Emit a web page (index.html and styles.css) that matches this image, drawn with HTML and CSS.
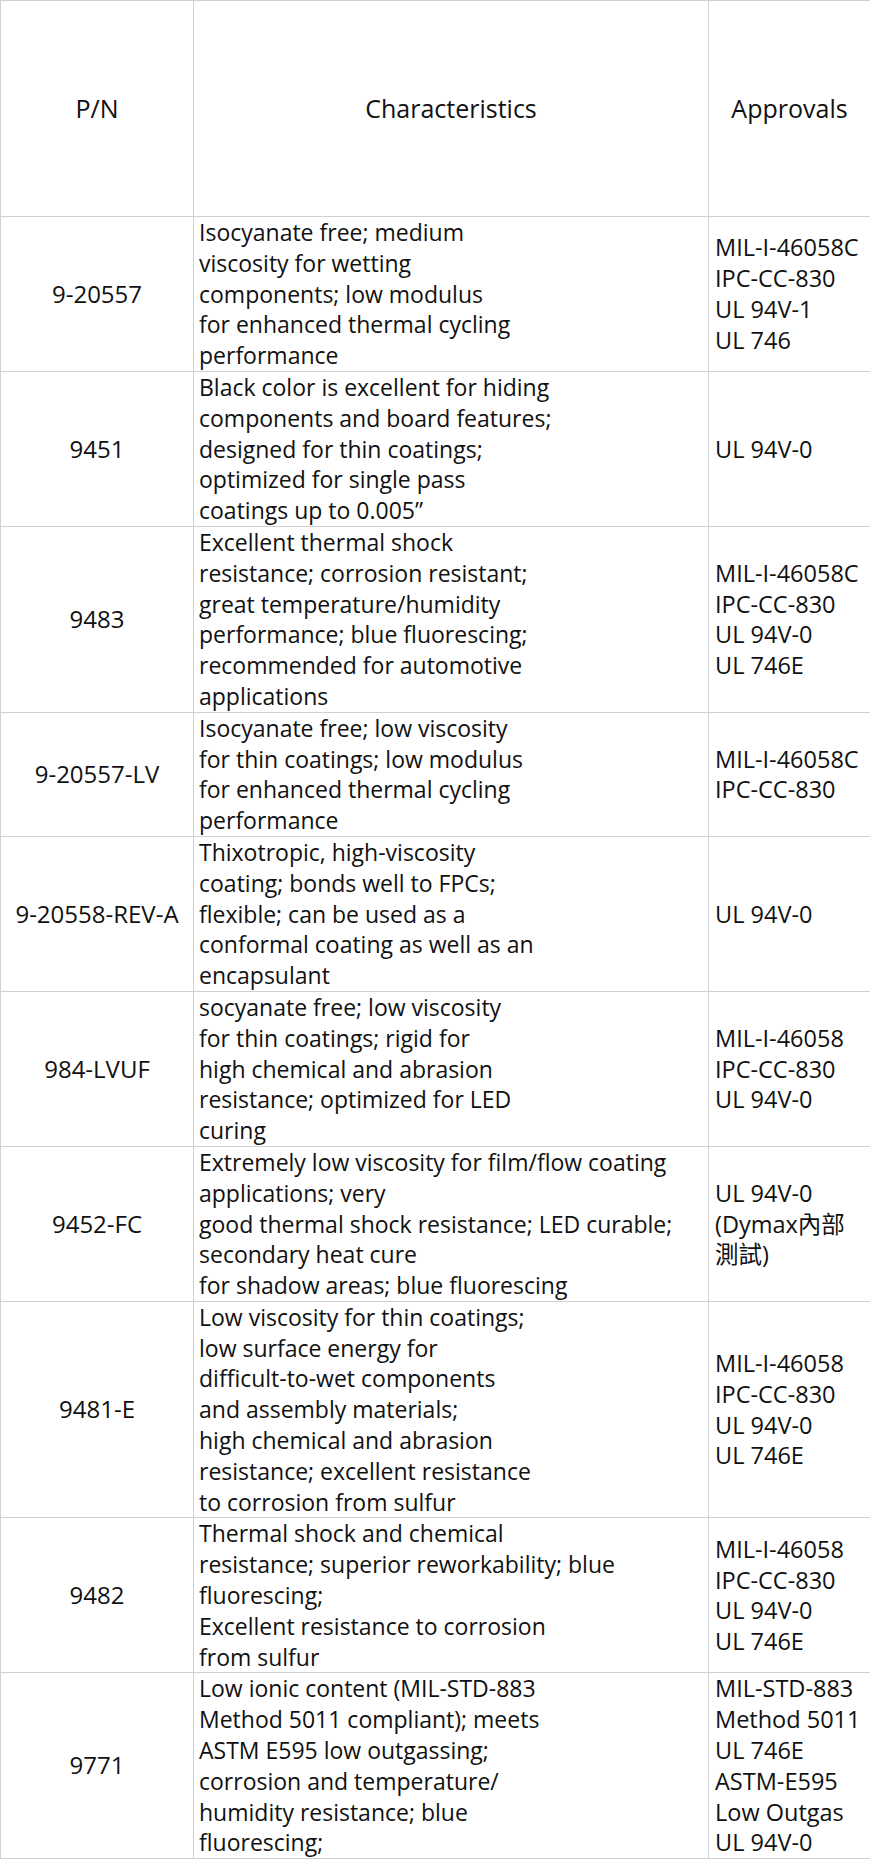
FILE: index.html
```html
<!DOCTYPE html>
<html lang="en">
<head>
<meta charset="utf-8">
<title>Conformal coatings</title>
<link rel="stylesheet" href="styles.css">
</head>
<body>
<table class="spec">
  <colgroup>
    <col class="c-pn">
    <col class="c-char">
    <col class="c-appr">
  </colgroup>
  <thead>
    <tr>
      <th>P/N</th>
      <th>Characteristics</th>
      <th>Approvals</th>
    </tr>
  </thead>
  <tbody>
    <tr>
      <td class="pn">9-20557</td>
      <td class="ch">Isocyanate free; medium<br>viscosity for wetting<br>components; low modulus<br>for enhanced thermal cycling<br>performance</td>
      <td class="ap">MIL-I-46058C<br>IPC-CC-830<br>UL 94V-1<br>UL 746</td>
    </tr>
    <tr>
      <td class="pn">9451</td>
      <td class="ch">Black color is excellent for hiding<br>components and board features;<br>designed for thin coatings;<br>optimized for single pass<br>coatings up to 0.005”</td>
      <td class="ap">UL 94V-0</td>
    </tr>
    <tr>
      <td class="pn">9483</td>
      <td class="ch">Excellent thermal shock<br>resistance; corrosion resistant;<br>great temperature/humidity<br>performance; blue fluorescing;<br>recommended for automotive<br>applications</td>
      <td class="ap">MIL-I-46058C<br>IPC-CC-830<br>UL 94V-0<br>UL 746E</td>
    </tr>
    <tr>
      <td class="pn">9-20557-LV</td>
      <td class="ch">Isocyanate free; low viscosity<br>for thin coatings; low modulus<br>for enhanced thermal cycling<br>performance</td>
      <td class="ap">MIL-I-46058C<br>IPC-CC-830</td>
    </tr>
    <tr>
      <td class="pn">9-20558-REV-A</td>
      <td class="ch">Thixotropic, high-viscosity<br>coating; bonds well to FPCs;<br>flexible; can be used as a<br>conformal coating as well as an<br>encapsulant</td>
      <td class="ap">UL 94V-0</td>
    </tr>
    <tr>
      <td class="pn">984-LVUF</td>
      <td class="ch">socyanate free; low viscosity<br>for thin coatings; rigid for<br>high chemical and abrasion<br>resistance; optimized for LED<br>curing</td>
      <td class="ap">MIL-I-46058<br>IPC-CC-830<br>UL 94V-0</td>
    </tr>
    <tr>
      <td class="pn">9452-FC</td>
      <td class="ch">Extremely low viscosity for film/flow coating<br>applications; very<br>good thermal shock resistance; LED curable;<br>secondary heat cure<br>for shadow areas; blue fluorescing</td>
      <td class="ap">UL 94V-0<br>(Dymax內部<br>測試)</td>
    </tr>
    <tr>
      <td class="pn">9481-E</td>
      <td class="ch">Low viscosity for thin coatings;<br>low surface energy for<br>difficult-to-wet components<br>and assembly materials;<br>high chemical and abrasion<br>resistance; excellent resistance<br>to corrosion from sulfur</td>
      <td class="ap">MIL-I-46058<br>IPC-CC-830<br>UL 94V-0<br>UL 746E</td>
    </tr>
    <tr>
      <td class="pn">9482</td>
      <td class="ch">Thermal shock and chemical<br>resistance; superior reworkability; blue<br>fluorescing;<br>Excellent resistance to corrosion<br>from sulfur</td>
      <td class="ap">MIL-I-46058<br>IPC-CC-830<br>UL 94V-0<br>UL 746E</td>
    </tr>
    <tr>
      <td class="pn">9771</td>
      <td class="ch">Low ionic content (MIL-STD-883<br>Method 5011 compliant); meets<br>ASTM E595 low outgassing;<br>corrosion and temperature/<br>humidity resistance; blue<br>fluorescing;</td>
      <td class="ap">MIL-STD-883<br>Method 5011<br>UL 746E<br>ASTM-E595<br>Low Outgas<br>UL 94V-0</td>
    </tr>
  </tbody>
</table>
</body>
</html>
```
FILE: styles.css
```css
html, body {
  margin: 0;
  padding: 0;
  background: #ffffff;
}

body {
  font-family: "Open Sans", "Noto Sans CJK TC", sans-serif;
  font-size: 23px;
  color: #111111;
}

.spec {
  width: 870px;
  border-collapse: collapse;
  table-layout: fixed;
}

.c-pn { width: 193px; }
.c-char { width: 515px; }
.c-appr { width: 162px; }

.spec th,
.spec td {
  border: 1px solid #d0d0d0;
  line-height: 30.8px;
  padding: 0;
  vertical-align: middle;
  white-space: nowrap;
  overflow: hidden;
}

.spec th {
  height: 215px;
  font-size: 25px;
  font-weight: normal;
  text-align: center;
}

.spec td.pn {
  font-size: 24px;
  text-align: center;
}

.spec td.ch {
  text-align: left;
  padding-left: 5px;
}

.spec td.ap {
  font-size: 23.5px;
  text-align: left;
  padding-left: 6px;
}
```
